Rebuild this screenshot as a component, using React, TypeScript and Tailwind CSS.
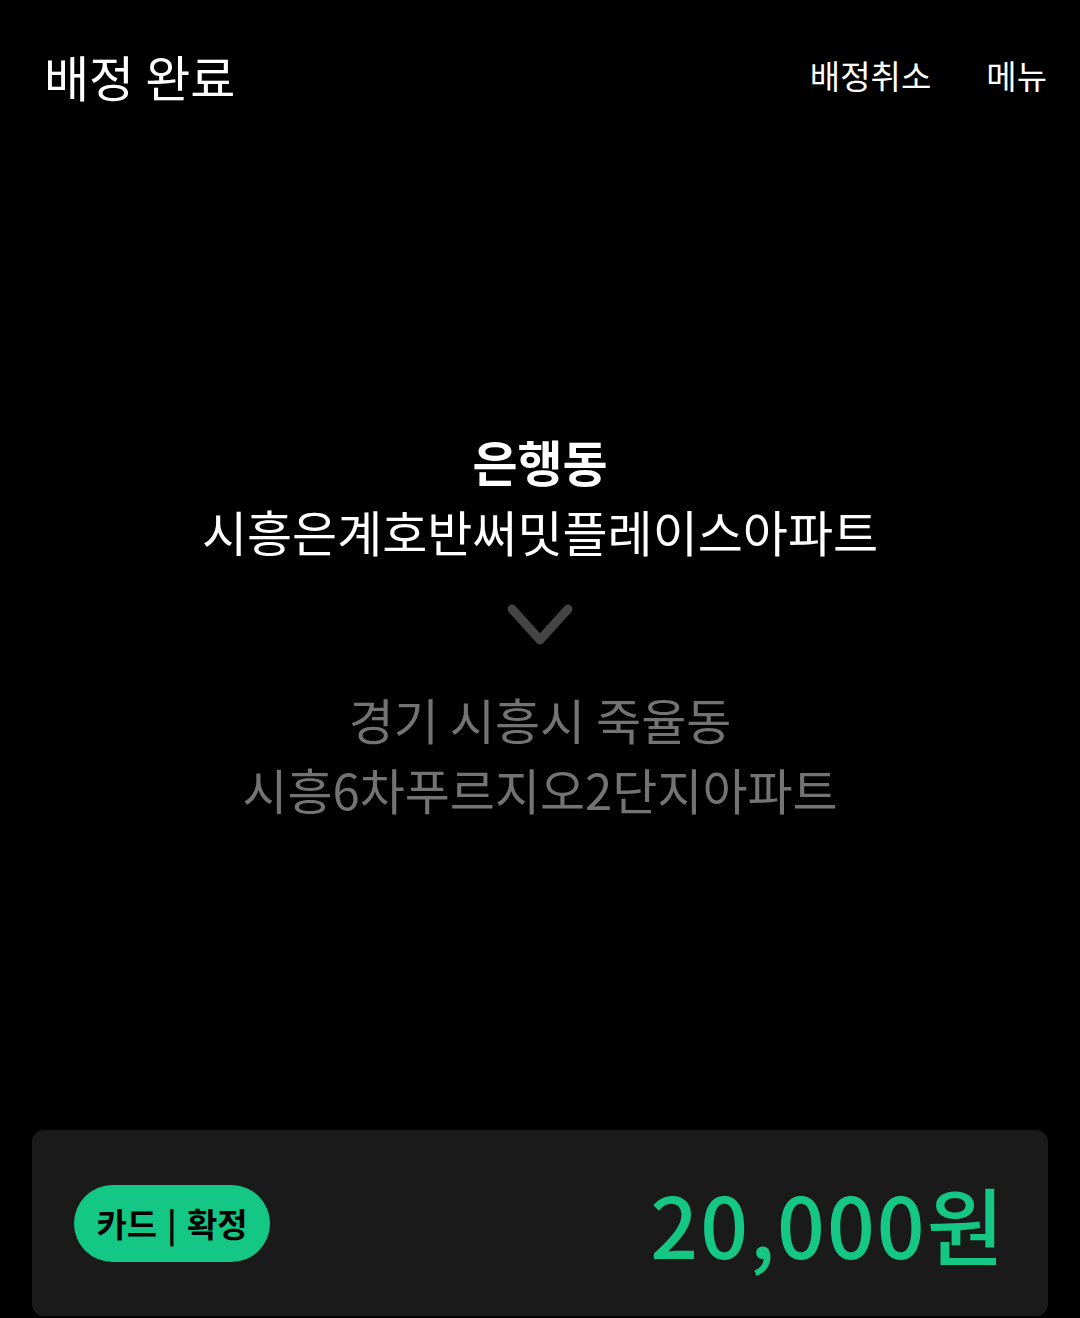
import React from "react";

const font = { fontFamily: '"Noto Sans CJK KR", "Noto Sans", sans-serif' };

export default function App() {
  return (
    <div style={font} className="w-[1080px] h-[1318px] bg-black text-white flex flex-col overflow-hidden">
      {/* Header */}
      <div className="flex items-center justify-between pl-[44px] pr-[33px] pt-[40px] h-[110px]">
        <h1 className="text-[49px] font-normal leading-none">배정 완료</h1>
        <div className="flex items-center gap-[55px] text-[33px] leading-none">
          <span>배정취소</span>
          <span>메뉴</span>
        </div>
      </div>

      {/* Route */}
      <div className="flex-1 flex flex-col items-center pt-[316px] text-center">
        <div className="text-[49px] font-bold leading-[70px]">은행동</div>
        <div className="text-[49px] leading-[70px]">시흥은계호반써밋플레이스아파트</div>
        <svg className="mt-[38px] w-[66px] h-[42px]" viewBox="0 0 66 42" fill="none">
          <path d="M5 5 L33 36 L61 5" stroke="#444444" strokeWidth="9" strokeLinecap="round" strokeLinejoin="round" />
        </svg>
        <div className="mt-[38px] text-[49px] leading-[70px] text-[#737373]">경기 시흥시 죽율동</div>
        <div className="text-[49px] leading-[70px] text-[#737373]">시흥6차푸르지오2단지아파트</div>
      </div>

      {/* Fare card */}
      <div className="mx-[32px] mb-[2px] h-[186px] rounded-[12px] bg-[#1a1a1a] flex items-center justify-between pl-[42px] pr-[42px]">
        <div className="h-[77px] w-[196px] rounded-full bg-[#14c784] flex items-center justify-center text-black text-[33px] font-bold leading-none">
          카드 <span className="mx-[10px] font-bold">|</span> 확정
        </div>
        <div className="text-[#14c784] text-[84px] font-medium leading-none tracking-[2px]">20,000원</div>
      </div>
    </div>
  );
}
